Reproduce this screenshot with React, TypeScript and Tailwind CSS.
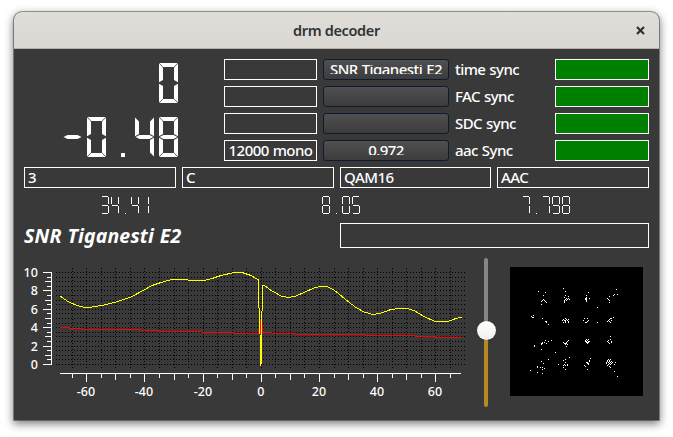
import type { ReactNode } from "react";

// Segment order: top, upper-left, upper-right, middle, lower-left, lower-right, bottom
const SEGMENTS: Record<string, string> = {
  "0": "abcefg",
  "1": "cf",
  "3": "acdfg",
  "4": "bcdf",
  "5": "abdfg",
  "7": "acf",
  "8": "abcdefg",
  "9": "abcdfg",
  "-": "d",
};

const BOLD: Record<string, string> = {
  a: "0.4,0 18.6,0 14.8,4 4.2,4",
  b: "0,0.4 4,4.4 4,17 0,19.2",
  c: "19,0.4 15,4.4 15,17 19,19.2",
  d: "0.5,20 4.5,18 14.5,18 18.5,20 14.5,22 4.5,22",
  e: "0,20.8 4,23 4,35.6 0,39.6",
  f: "19,20.8 15,23 15,35.6 19,39.6",
  g: "0.4,40 18.6,40 14.8,36 4.2,36",
};

const THIN: Record<string, string> = {
  a: "M1 .5H7",
  b: "M.5 1V8",
  c: "M7.5 1V8",
  d: "M1 9.5H7",
  e: "M.5 10V17",
  f: "M7.5 10V17",
  g: "M1 17.5H7",
};

function BigLcd({ value }: { value: string }) {
  const start = 135 - (value.length - 1) * 24;
  return (
    <svg className="h-12 w-[194px]" aria-label={value}>
      {value.split("").map((ch, i) => (
        <g key={i} transform={`translate(${start + i * 24} 4)`} fill="#fff">
          {ch === "." ? (
            <rect x="10" y="36" width="4" height="4" />
          ) : (
            <>
              {(SEGMENTS[ch] ?? "").split("").map((s) => (
                <polygon key={s} points={BOLD[s]} />
              ))}
            </>
          )}
        </g>
      ))}
    </svg>
  );
}

function SmallLcd({ value, start }: { value: string; start: number }) {
  return (
    <svg className="h-[23px] w-full" aria-label={value} shapeRendering="crispEdges">
      {value.split("").map((ch, i) => (
        <g key={i} transform={`translate(${start + i * 10} 2)`} stroke="#fff" fill="none">
          {ch === "." ? (
            <path d="M4 17.5H5" />
          ) : (
            (SEGMENTS[ch] ?? "").split("").map((s) => <path key={s} d={THIN[s]} />)
          )}
        </g>
      ))}
    </svg>
  );
}

function Box({ children, className = "" }: { children?: ReactNode; className?: string }) {
  return (
    <div className={`flex h-[21px] items-center overflow-hidden border border-white whitespace-nowrap ${className}`}>
      {children}
    </div>
  );
}

function Button({ children }: { children?: ReactNode }) {
  return (
    <div className="flex h-[21px] items-center justify-center rounded-[3px] border border-[#0c1a33] bg-linear-to-b from-[#505050] to-[#3c3c3c]">
      <div className="flex h-[9px] items-center overflow-hidden whitespace-nowrap">{children}</div>
    </div>
  );
}

const YELLOW =
  "60,296 64,299 69,302 77,305.5 83,307 92,307 104,305 116,302 131,297 144,290 152,285.5 161,282.5 170,280 178,279 184,279 188,280 206,280 212,278.5 221,275.5 234,272.5 242,272.5 251,275.5 258.5,280 259,308 260,334 260.5,365 261,365 262.5,286 264,285.3 272,291 282,296.5 289,297.5 296,296 304,292.5 314,288 320,286.5 327,286.5 334,290 342,296.5 348,301.5 356,307.5 364,312 373,314.5 381,313 391,309.5 399,308.5 407,308.5 414,310.5 424,316.5 435,321.5 442,322 449,321 456,318.5 462,317";

const RED =
  "M60 327.5H69M69 328.5H83M83 329.5H141M141 330.5H159M159 331.5H202M202 332.5H234M234 333.5H258M258.5 334V329M259.5 334V324M260.5 334V319M261.5 334V319M262.5 333V325M262 332.5H272M272 333.5H295M295 334.5H365M365 335.5H415M415 336.5H435M435 337.5H462";

function Plot() {
  const xs = Array.from({ length: 27 }, (_, i) => -65 + i * 5);
  const ys = Array.from({ length: 21 }, (_, i) => i * 0.5);
  const px = (v: number) => Math.round(260.8 + v * 2.909) + 0.5;
  const py = (v: number) => Math.round(364 - v * 9.2) + 0.5;
  return (
    <svg className="h-[156px] w-[450px]" viewBox="24 254 450 156">
      <g stroke="#000" strokeDasharray="1 2" shapeRendering="crispEdges">
        {ys.map((v) => (
          <path key={v} d={`M56 ${py(v)}H466`} />
        ))}
        {xs.map((v) => (
          <path key={v} d={`M${px(v)} 268V368`} />
        ))}
      </g>
      <g stroke="#fff" shapeRendering="crispEdges">
        <path d="M51.5 272V365M60 373.5H461" />
        {ys.map((v) => (
          <path key={v} d={`M${v % 2 === 0 ? 43 : v % 1 === 0 ? 45 : 47} ${py(v)}H51`} />
        ))}
        {xs.map((v) => (
          <path key={v} d={`M${px(v)} 373V${v % 20 === 0 ? 382 : v % 10 === 0 ? 380 : 378}`} />
        ))}
      </g>
      <path d={RED} stroke="#f00" shapeRendering="crispEdges" />
      <polyline points={YELLOW} fill="none" stroke="#ff0" shapeRendering="crispEdges" />
      <g fill="#fff" className="font-['Noto_Sans','Open_Sans',sans-serif] text-[12.5px] font-medium tracking-[0.1px]">
        {[0, 2, 4, 6, 8, 10].map((v) => (
          <text key={v} x="38" y={py(v) + 4.5} textAnchor="end">
            {v}
          </text>
        ))}
        {[-60, -40, -20, 0, 20, 40, 60].map((v) => (
          <text key={v} x={px(v) - 0.5} y="396" textAnchor="middle">
            {v}
          </text>
        ))}
      </g>
    </svg>
  );
}

// Received symbols of the 16-QAM constellation
const SYMBOLS: [number, number][] = [
  [28, 24], [35, 25], [33, 28], [33, 32], [32, 33], [34, 33], [31, 34], [35, 34], [36, 35], [31, 37],
  [53, 21], [55, 24], [55, 28], [58, 29], [54, 30], [56, 31], [55, 32], [57, 32], [59, 32], [54, 33], [56, 33], [58, 31], [54, 35], [54, 34],
  [78, 25], [76, 28], [76, 30], [75, 31], [76, 31], [76, 32], [79, 31], [76, 33], [75, 32], [76, 34], [87, 40],
  [106, 22], [107, 27], [104, 27], [103, 28], [99, 29], [97, 31], [98, 32], [99, 33], [99, 35],
  [23, 48], [21, 49], [23, 50], [22, 50], [32, 51], [35, 54], [36, 54], [36, 55], [38, 57],
  [55, 51], [53, 52], [56, 52], [58, 52], [52, 53], [54, 53], [55, 53], [57, 53], [58, 54], [55, 54], [55, 55], [58, 55], [53, 55],
  [74, 51], [77, 51], [73, 53], [78, 53], [75, 55], [77, 54], [76, 55], [87, 55],
  [103, 50], [100, 51], [101, 51], [99, 52], [98, 53], [101, 53], [99, 54], [100, 55], [97, 54],
  [41, 73], [35, 73], [38, 74], [34, 75], [36, 76], [32, 75], [32, 76], [31, 76], [31, 77], [24, 78], [24, 79], [31, 82], [45, 85],
  [58, 73], [57, 74], [56, 75], [53, 75], [54, 76], [55, 76], [56, 76], [55, 77], [57, 77], [56, 79],
  [76, 72], [78, 72], [75, 73], [77, 73], [76, 74], [78, 74], [75, 74], [79, 74], [77, 75], [76, 75], [77, 76], [78, 75],
  [100, 69], [100, 72], [98, 73], [97, 74], [101, 74], [98, 75], [101, 75], [99, 76],
  [38, 92], [31, 94], [33, 96], [27, 99], [27, 100], [32, 100], [30, 100], [34, 101], [32, 102], [20, 103], [27, 105], [32, 106],
  [59, 90], [55, 92], [53, 93], [55, 95], [48, 97], [54, 97], [57, 97], [53, 98], [55, 98], [57, 98], [53, 100], [55, 102],
  [80, 91], [79, 93], [79, 94], [77, 95], [76, 95], [77, 96], [78, 96], [78, 97], [74, 98], [75, 99], [77, 102],
  [98, 92], [100, 92], [97, 93], [99, 93], [97, 94], [99, 94], [101, 94], [96, 95], [98, 95], [100, 95], [102, 95], [105, 95], [96, 96], [99, 96], [101, 96], [98, 97], [100, 97], [97, 98], [104, 97], [99, 99], [100, 100], [104, 104], [107, 109],
];

function Constellation() {
  return (
    <svg className="mt-[13px] ml-3 h-[129px] w-[133px] bg-black" shapeRendering="crispEdges" fill="#fff">
      {SYMBOLS.map(([x, y], i) => (
        <rect key={i} x={x} y={y} width="1" height="1" />
      ))}
    </svg>
  );
}

function Slider() {
  return (
    <div className="relative flex h-[156px] w-6 flex-col items-center pt-1">
      <div className="h-[73px] w-1 rounded-t-full bg-[#868686]" />
      <div className="h-[76px] w-1 rounded-b-full bg-[#b68a20]" />
      <div className="absolute top-[67px] left-[2.5px] size-[19px] rounded-full bg-linear-to-b from-white to-[#f1f0ee] shadow-[0_0_1px_#222]" />
    </div>
  );
}

const SYNCS = [
  { info: "", button: "SNR Tiganesti E2", label: "time sync" },
  { info: "", button: "", label: "FAC sync" },
  { info: "", button: "", label: "SDC sync" },
  { info: "12000 mono", button: "0.972", label: "aac Sync" },
];

export default function App() {
  return (
    <div className="h-[437px] w-[673px] overflow-hidden bg-white pt-3 pl-[14px] font-['Noto_Sans','Open_Sans',sans-serif] text-[15px] font-medium tracking-[-0.55px] [word-spacing:0.6px] text-white">
      <div className="h-[408px] w-[645px] rounded-t-lg bg-[#393939] shadow-[0_0_0_1px_rgba(0,0,0,0.35),0_3px_9px_1px_rgba(0,0,0,0.5)]">
        <header className="flex h-[37px] items-center rounded-t-lg border-b border-[#b8b0a8] bg-linear-to-b from-[#e1deda] to-[#dad6d2] text-[#2e3436]">
          <div className="w-[37px]" />
          <h1 className="flex-1 text-center text-[14.5px] leading-5 font-semibold tracking-[-0.35px] [word-spacing:0]">drm decoder</h1>
          <div className="flex w-[37px] justify-center">
            <svg className="size-[9px]" viewBox="0 0 9 9" stroke="#2e3436" strokeWidth="2.2">
              <path d="M1 1L8 8M8 1L1 8" />
            </svg>
          </div>
        </header>
        <main className="flex flex-col gap-1.5 px-2.5 pt-2.5">
          <section className="flex gap-1.5">
            <div className="flex flex-col gap-1.5">
              <BigLcd value="0" />
              <BigLcd value="-0.48" />
            </div>
            <div className="grid grid-cols-[93px_126px_94px_94px] gap-1.5">
              {SYNCS.map((s) => (
                <div key={s.label} className="contents">
                  <Box className="justify-center">{s.info}</Box>
                  <Button>{s.button}</Button>
                  <div className="flex h-[21px] items-center whitespace-nowrap">{s.label}</div>
                  <Box className="bg-[#008000]" />
                </div>
              ))}
            </div>
          </section>
          <section className="grid grid-cols-[152px_152px_151px_152px] gap-1.5">
            {["3", "C", "QAM16", "AAC"].map((t) => (
              <Box key={t} className="pl-[3px]">
                {t}
              </Box>
            ))}
          </section>
          <section className="grid grid-cols-[204px_205px_204px] gap-1.5">
            <SmallLcd value="34.41" start={77} />
            <SmallLcd value="8.05" start={88} />
            <SmallLcd value="7.798" start={77} />
          </section>
          <section className="flex h-[25px] items-center justify-between">
            <span className="text-[19.5px] font-bold italic tracking-[0.15px]">SNR Tiganesti E2</span>
            <Box className="h-[25px] w-[309px]" />
          </section>
          <section className="flex">
            <Plot />
            <Slider />
            <Constellation />
          </section>
        </main>
      </div>
    </div>
  );
}
